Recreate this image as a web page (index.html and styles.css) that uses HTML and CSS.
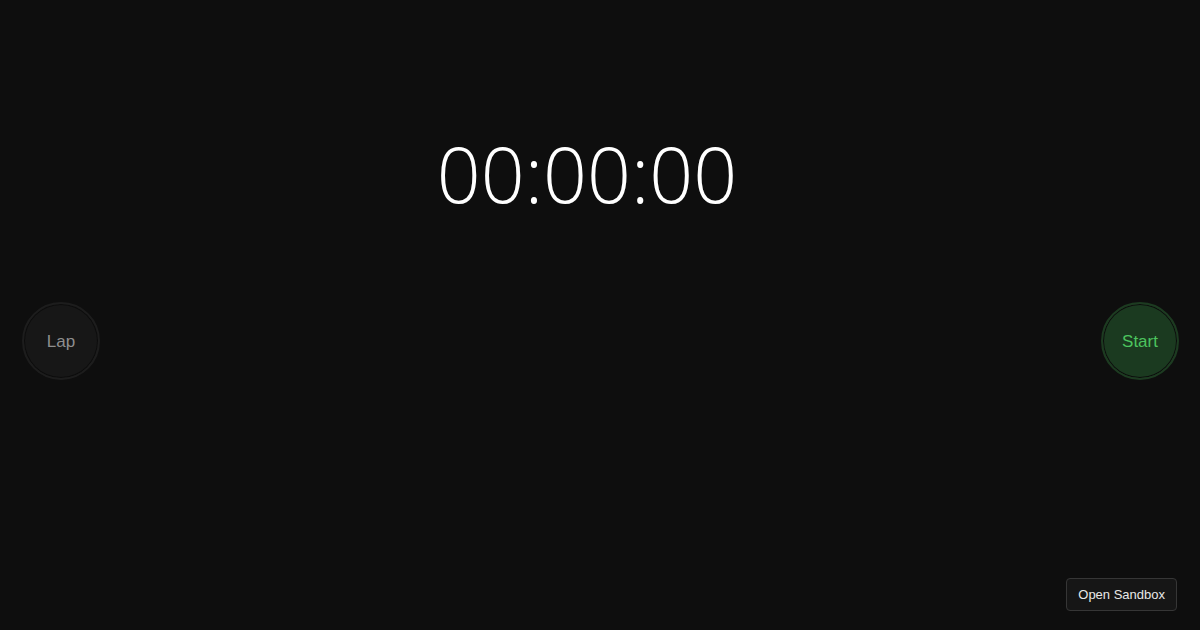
FILE: index.html
```html
<!DOCTYPE html>
<html lang="en">
<head>
    <meta charset="UTF-8">
    <meta name="viewport" content="width=device-width, initial-scale=1.0">
    <title>Stopwatch</title>
    <link rel="stylesheet" href="styles.css">
</head>
<body>
    <div class="app">
        <div class="display" id="display">00:00:00</div>

        <div class="controls">
            <button class="round lap" id="lapBtn">Lap</button>
            <button class="round start" id="startBtn">Start</button>
        </div>
    </div>

    <button class="sandbox">Open Sandbox</button>
</body>
</html>
```

FILE: styles.css
```css
html, body {
    height: 100%;
}

body {
    margin: 0;
    background-color: #0e0e0e;
    color: #fff;
    font-family: 'Liberation Sans', Arial, sans-serif;
    overflow: hidden;
}

.app {
    display: flex;
    flex-direction: column;
    padding-top: 124px;
}

.display {
    text-align: center;
    font-family: 'Open Sans', sans-serif;
    font-weight: 340;
    font-size: 77px;
    line-height: 100px;
    padding-right: 26px;
}

.controls {
    display: flex;
    justify-content: space-between;
    align-items: center;
    padding: 0 21px 0 22px;
    margin-top: 78px;
}

.round {
    width: 78px;
    height: 78px;
    border-radius: 50%;
    border: 2px solid;
    padding-top: 2px;
    font-family: inherit;
    font-size: 17px;
    cursor: pointer;
}

.lap {
    background-color: #171717;
    border-color: #1d1d1d;
    color: #8e8e8e;
    box-shadow: inset 0 0 0 1px #0d0d0d;
}

.start {
    background-color: #1b3a20;
    border-color: #1d3b21;
    color: #4cc45e;
    box-shadow: inset 0 0 0 1px #0d0d0d;
}

.sandbox {
    position: absolute;
    right: 23px;
    bottom: 19px;
    height: 33px;
    padding: 0 11px;
    background-color: #161616;
    color: #e8e8e8;
    border: 1px solid #363636;
    border-radius: 4px;
    font-family: inherit;
    font-size: 13px;
}
```
